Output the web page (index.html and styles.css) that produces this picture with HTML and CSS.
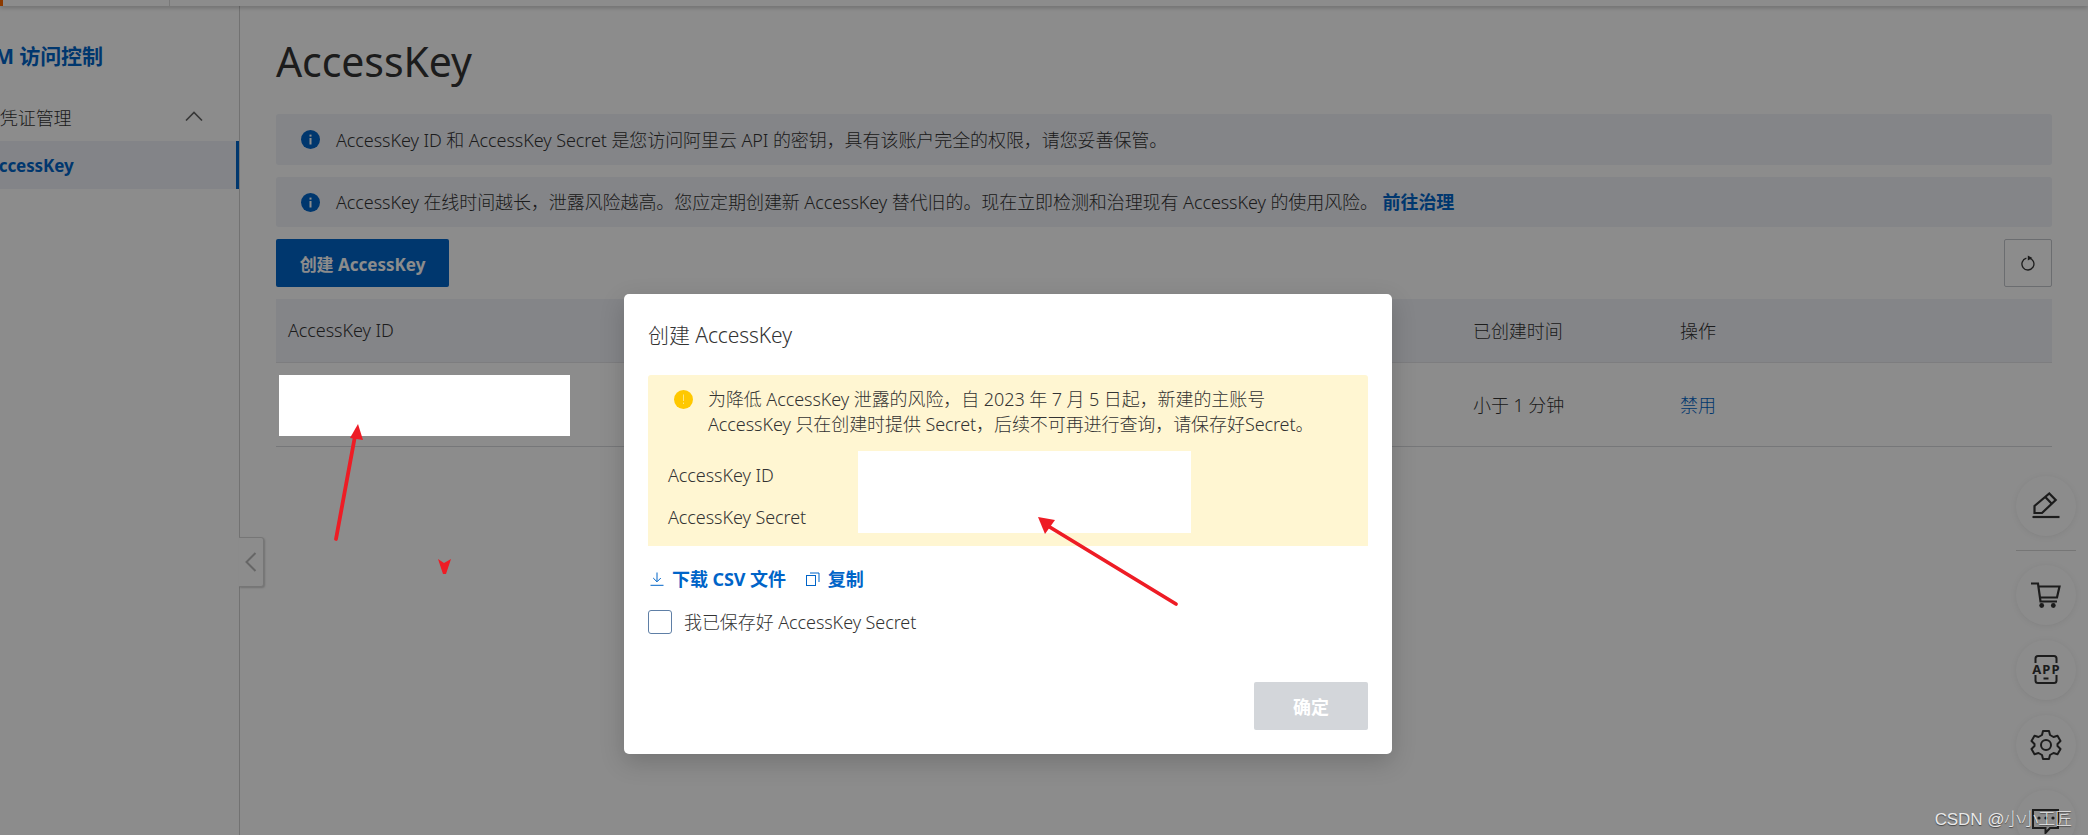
FILE: index.html
```html
<!DOCTYPE html>
<html lang="zh-CN">
  <head>
    <meta charset="UTF-8" />
    <meta name="viewport" content="width=device-width, initial-scale=1.0" />
    <title>AccessKey</title>
    <link rel="stylesheet" href="styles.css">
  </head>
  <body>
    <div class="topbar">
      <div class="topbar-logo"></div>
      <div class="topbar-rest"></div>
    </div>
    <div class="layout">
      <aside class="sidebar">
        <div class="sidebar-title">RAM 访问控制</div>
        <div class="nav-group">
          <span class="nav-group-name">身份凭证管理</span>
          <svg class="nav-chevron" viewBox="0 0 18 10" width="18" height="10">
            <path d="M1 9.5 L9 1.5 L17 9.5" fill="none" stroke="#666" stroke-width="1.6" />
          </svg>
        </div>
        <div class="nav-item">AccessKey</div>
      </aside>
      <main class="content">
        <h1>AccessKey</h1>
        <div class="notice">
          <svg class="info-icon" viewBox="0 0 19 19" width="19" height="19">
            <circle cx="9.5" cy="9.5" r="9.5" fill="#0064c8" />
            <rect x="8.5" y="8" width="2" height="6.5" fill="#fff" />
            <rect x="8.5" y="4.6" width="2" height="2" fill="#fff" />
          </svg>
          <span>AccessKey ID 和 AccessKey Secret 是您访问阿里云 API 的密钥，具有该账户完全的权限，请您妥善保管。</span>
        </div>
        <div class="notice">
          <svg class="info-icon" viewBox="0 0 19 19" width="19" height="19">
            <circle cx="9.5" cy="9.5" r="9.5" fill="#0064c8" />
            <rect x="8.5" y="8" width="2" height="6.5" fill="#fff" />
            <rect x="8.5" y="4.6" width="2" height="2" fill="#fff" />
          </svg>
          <span>AccessKey 在线时间越长，泄露风险越高。您应定期创建新 AccessKey 替代旧的。现在立即检测和治理现有 AccessKey 的使用风险。 <a class="notice-link">前往治理</a></span>
        </div>
        <div class="toolbar">
          <button class="btn-primary">创建 AccessKey</button>
          <button class="btn-refresh">
            <svg viewBox="0 0 16 16" width="16" height="16">
              <path d="M6.4 3.2 A6 6 0 1 0 9 3.1" fill="none" stroke="#333" stroke-width="1.3" />
              <path d="M7.8 0.4 L12.4 3 L7.8 5.6 Z" fill="#333" />
            </svg>
          </button>
        </div>
        <div class="table-row table-head">
          <div>AccessKey ID</div>
          <div>已创建时间</div>
          <div>操作</div>
        </div>
        <div class="table-row table-body">
          <div></div>
          <div>小于 1 分钟</div>
          <div class="table-link">禁用</div>
        </div>
      </main>
    </div>

    <div class="collapse-tab">
      <svg viewBox="0 0 12 20" width="12" height="20">
        <path d="M10.5 1 L1.5 10 L10.5 19" fill="none" stroke="#bbb" stroke-width="2" />
      </svg>
    </div>

    <div class="float-tools">
      <div class="float-btn">
        <svg viewBox="0 0 28 28" width="28" height="28">
          <path d="M0.5 25 H27.5" stroke="#333" stroke-width="2.2" />
          <path d="M2.5 21 V14 L17.3 1.5 L23.7 8 L10 21 Z M13.3 5 L20 12" fill="none" stroke="#333" stroke-width="2.2" />
        </svg>
      </div>
      <div class="float-divider"></div>
      <div class="float-btn">
        <svg viewBox="0 0 30 30" width="30" height="30">
          <path d="M0 3.5 H7 L9.5 21.5 H26 M8 6.5 H28.5 L26 17.5 H9" fill="none" stroke="#333" stroke-width="2.2" />
          <circle cx="10.7" cy="25.5" r="2.4" fill="#333" />
          <circle cx="22.3" cy="25.5" r="2.4" fill="#333" />
        </svg>
      </div>
      <div class="float-btn">
        <svg viewBox="0 0 30 30" width="30" height="30">
          <path d="M4.5 8 V3.5 Q4.5 1 7 1 H23 Q25.5 1 25.5 3.5 V8 M4.5 20 V25.5 Q4.5 28 7 28 H23 Q25.5 28 25.5 25.5 V20" fill="none" stroke="#333" stroke-width="2" />
          <path d="M12.5 23.5 H17.5" stroke="#333" stroke-width="2" />
          <text x="15.5" y="18.5" class="app-text" text-anchor="middle">APP</text>
        </svg>
      </div>
      <div class="float-btn">
        <svg viewBox="0 0 32 32" width="32" height="32">
          <path d="M13 2 H19 L20 6 L23.5 8 L27.5 6.8 L30.5 12 L27.5 15 V17 L30.5 20 L27.5 25.2 L23.5 24 L20 26 L19 30 H13 L12 26 L8.5 24 L4.5 25.2 L1.5 20 L4.5 17 V15 L1.5 12 L4.5 6.8 L8.5 8 L12 6 Z" fill="none" stroke="#333" stroke-width="2" stroke-linejoin="round" />
          <circle cx="16" cy="16" r="5" fill="none" stroke="#333" stroke-width="2" />
        </svg>
      </div>
      <div class="float-btn">
        <svg viewBox="0 0 28 28" width="28" height="28">
          <path d="M1 4 H26 V22 H18 L13.5 27 V22 H1 Z" fill="none" stroke="#333" stroke-width="2" />
          <circle cx="7" cy="12" r="1.6" fill="#333" />
          <circle cx="14" cy="12" r="1.6" fill="#333" />
          <circle cx="21" cy="12" r="1.6" fill="#333" />
        </svg>
      </div>
    </div>

    <div class="mask"></div>

    <div class="dialog">
      <div class="dialog-title">创建 AccessKey</div>
      <div class="warning">
        <svg class="warning-icon" viewBox="0 0 19 19" width="19" height="19">
          <circle cx="9.5" cy="9.5" r="9.5" fill="#ffc800" />
          <rect x="9" y="4.5" width="1" height="6.5" fill="#ffe680" />
          <rect x="9" y="12.5" width="1" height="1.5" fill="#ffe680" />
        </svg>
        <div>为降低 AccessKey 泄露的风险，自 2023 年 7 月 5 日起，新建的主账号<br />AccessKey 只在创建时提供 Secret，后续不可再进行查询，请保存好Secret。</div>
      </div>
      <div class="key-list">
        <div>AccessKey ID</div>
        <div>AccessKey Secret</div>
      </div>
      <div class="dialog-links">
        <a class="dialog-link">
          <svg viewBox="0 0 14 14" width="14" height="14">
            <path d="M7 0.5 V9.5 M3.2 6 L7 9.8 L10.8 6 M0.5 13.3 H13.5" fill="none" stroke="#0064c8" stroke-width="1" />
          </svg>
          下载 CSV 文件
        </a>
        <a class="dialog-link">
          <svg viewBox="0 0 14 14" width="14" height="14">
            <rect x="0.5" y="3.5" width="9" height="10" fill="none" stroke="#0064c8" />
            <path d="M4 1 H13 V10" fill="none" stroke="#0064c8" />
          </svg>
          复制
        </a>
      </div>
      <label class="confirm-check">
        <span class="check-box"></span>
        <span class="check-label">我已保存好 AccessKey Secret</span>
      </label>
      <div class="dialog-footer">
        <button class="btn-disabled">确定</button>
      </div>
    </div>

    <div class="redact redact-row"></div>
    <div class="redact redact-keys"></div>
    <svg class="marks" viewBox="0 0 2088 835" width="2088" height="835">
      <g stroke="#ee1c25" stroke-width="3.8" stroke-linecap="round" fill="#ee1c25">
        <line x1="336" y1="539" x2="355" y2="436" />
        <line x1="1176" y1="604" x2="1048" y2="526" />
      </g>
      <path d="M358 424 L350 438 L363 440 Z" fill="#ee1c25" />
      <path d="M1038 517 L1055 520 L1045 534 Z" fill="#ee1c25" />
      <path d="M438 559 L444 563 L451 559 L446 574 L443 574 Z" fill="#ee1c25" />
    </svg>
    <div class="watermark">CSDN @小小工匠</div>
  </body>
</html>
```

FILE: styles.css
```css
* {
  box-sizing: border-box;
}
html,
body {
  height: 835px;
  overflow: hidden;
}
body {
  margin: 0;
  background-color: #fff;
  color: #333;
  font-family: "Noto Sans", "Noto Sans CJK SC", sans-serif;
  font-size: 18px;
  font-weight: 300;
  letter-spacing: -0.08px;
}
.topbar {
  display: flex;
  height: 6px;
  background-color: #fff;
  box-shadow: 0 2px 4px rgba(0, 0, 0, 0.2);
  position: relative;
}
.topbar-logo {
  width: 170px;
  border-left: 3px solid #ff6a00;
  border-right: 1px solid #ddd;
}
.layout {
  display: flex;
  height: 829px;
}
.sidebar {
  width: 240px;
  flex-shrink: 0;
  border-right: 1px solid #d0d0d0;
  overflow: hidden;
}
.sidebar-title {
  margin: 36px 0 0 -34px;
  line-height: 28px;
  font-size: 21px;
  font-weight: 700;
  color: #0064c8;
  white-space: nowrap;
}
.nav-group {
  display: flex;
  align-items: center;
  margin: 33px 0 0 -36px;
  height: 28px;
  white-space: nowrap;
}
.nav-group-name {
  width: 221px;
}
.nav-chevron {
  margin-top: -2px;
}
.nav-item {
  display: flex;
  align-items: center;
  height: 48px;
  margin-top: 10px;
  background-color: #eff1f7;
  border-right: 3px solid #0064c8;
  color: #0064c8;
  font-size: 17px;
  font-weight: 700;
  text-indent: -13px;
}
.content {
  flex: 1;
  padding: 26px 36px 0 36px;
}
h1 {
  margin: 0 0 24px;
  font-size: 41px;
  font-weight: 400;
  line-height: 58px;
  color: #333;
}
.notice {
  display: flex;
  align-items: center;
  gap: 16px;
  height: 50px;
  margin-bottom: 12px;
  padding-left: 25px;
  background-color: #f0f2f8;
  border-radius: 3px;
}
.notice span {
  margin-top: -2px;
}
h1 + .notice {
  height: 51px;
}
.notice-link {
  color: #0064c8;
  font-weight: 700;
}
.toolbar {
  display: flex;
  justify-content: space-between;
  margin-bottom: 12px;
}
button {
  font-family: inherit;
  cursor: pointer;
}
.btn-primary {
  width: 173px;
  height: 48px;
  background-color: #0064c8;
  color: #fff;
  border: none;
  border-radius: 2px;
  font-size: 17px;
  font-weight: 700;
}
.btn-refresh {
  display: flex;
  align-items: center;
  justify-content: center;
  width: 48px;
  height: 48px;
  background-color: transparent;
  border: 1px solid #c4c6cc;
  border-radius: 2px;
}
.table-row {
  display: grid;
  grid-template-columns: 1185px 207px 1fr;
  align-items: center;
  padding-left: 12px;
  border-bottom: 1px solid #e3e4e8;
}
.table-row > div {
  margin-top: -2px;
}
.table-head {
  height: 64px;
  background-color: #f0f2f8;
}
.table-body {
  height: 84px;
  border-bottom-color: #d8d9dc;
}
.table-link {
  color: #0064c8;
}
.collapse-tab {
  position: absolute;
  left: 239px;
  top: 537px;
  display: flex;
  align-items: center;
  justify-content: center;
  width: 25px;
  height: 50px;
  background-color: #fff;
  border: 1px solid #d8d8d8;
  border-left: none;
  border-radius: 0 3px 3px 0;
  box-shadow: 1px 1px 2px rgba(0, 0, 0, 0.2);
}
.float-tools {
  position: absolute;
  left: 2016px;
  top: 476px;
  display: flex;
  flex-direction: column;
  gap: 15px;
}
.float-btn {
  display: flex;
  align-items: center;
  justify-content: center;
  width: 60px;
  height: 60px;
  flex-shrink: 0;
  background-color: #fff;
  border-radius: 50%;
  box-shadow: 0 1px 6px rgba(0, 0, 0, 0.08);
}
.float-divider {
  height: 1px;
  margin: -1px 0;
  background-color: #d8d8d8;
}
.app-text {
  font-size: 13px;
  font-weight: 700;
  fill: #333;
  letter-spacing: 1.2px;
}
.mask {
  position: absolute;
  inset: 0;
  background-color: rgba(0, 0, 0, 0.45);
}
.dialog {
  position: absolute;
  left: 624px;
  top: 294px;
  width: 768px;
  height: 460px;
  padding: 28px 24px 24px;
  background-color: #fff;
  border-radius: 5px;
  box-shadow: 0 8px 24px rgba(0, 0, 0, 0.18);
  display: flex;
  flex-direction: column;
}
.dialog-title {
  font-size: 21px;
  line-height: 26px;
  margin-bottom: 27px;
}
.warning {
  display: flex;
  gap: 15px;
  height: 71px;
  padding: 12px 0 0 26px;
  line-height: 25px;
  background-color: #fff6d2;
  border-radius: 3px 3px 0 0;
}
.warning-icon {
  margin-top: 3px;
  flex-shrink: 0;
}
.key-list {
  display: flex;
  flex-direction: column;
  gap: 17px;
  height: 100px;
  padding: 17px 0 0 20px;
  line-height: 25px;
  background-color: #fff6d2;
}
.dialog-links {
  display: flex;
  gap: 18px;
  margin-top: 20px;
  line-height: 26px;
}
.dialog-link {
  display: flex;
  align-items: center;
  gap: 8px;
  color: #0064c8;
  font-weight: 700;
  padding-left: 2px;
}
.confirm-check {
  display: flex;
  align-items: center;
  gap: 12px;
  margin-top: 18px;
  height: 24px;
}
.check-box {
  width: 24px;
  height: 24px;
  border: 1px solid #5f7fa6;
  border-radius: 3px;
}
.check-label {
  margin-top: -2px;
}
.dialog-footer {
  display: flex;
  justify-content: flex-end;
  margin-top: auto;
}
.btn-disabled {
  width: 114px;
  height: 48px;
  background-color: #d3d6da;
  color: #fff;
  border: none;
  border-radius: 2px;
  font-size: 18px;
  font-weight: 700;
}
.redact {
  position: absolute;
  background-color: #fff;
}
.redact-row {
  left: 279px;
  top: 375px;
  width: 291px;
  height: 61px;
}
.redact-keys {
  left: 858px;
  top: 451px;
  width: 333px;
  height: 82px;
}
.marks {
  position: absolute;
  left: 0;
  top: 0;
}
.watermark {
  position: absolute;
  right: 16px;
  top: 805px;
  color: #e8e8e8;
  font-family: "Liberation Sans", "Noto Sans CJK SC", sans-serif;
  font-size: 17px;
  text-shadow: 0 1px 1px rgba(0, 0, 0, 0.5);
}
```
